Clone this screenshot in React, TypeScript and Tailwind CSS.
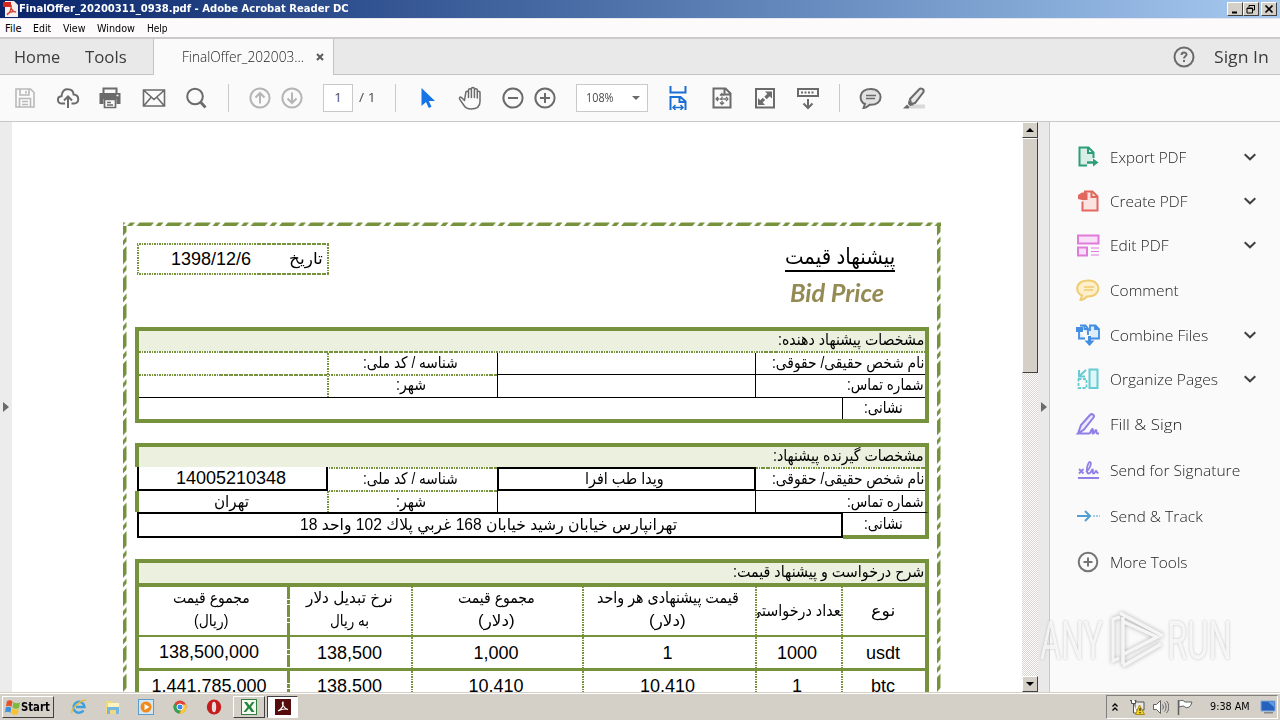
import { useLayoutEffect, useRef, useState } from 'react';
import type { ReactNode } from 'react';
import clsx from 'clsx';

// ============================================================
// Shared helpers
// ============================================================

// Keeps a run of text on one line and fits it to a fixed width
function Fit({ w, className, rtl, children }: { w: number; className?: string; rtl?: boolean; children: ReactNode }) {
  const ref = useRef<HTMLSpanElement>(null);
  const [scale, setScale] = useState(1);

  useLayoutEffect(() => {
    if (ref.current) setScale(w / ref.current.offsetWidth);
  }, [w]);

  return (
    <span className={clsx('flex shrink-0 justify-start whitespace-nowrap', className)} style={{ width: w }}>
      <span
        ref={ref}
        dir={rtl ? 'rtl' : 'ltr'}
        className="block w-max shrink-0 origin-left"
        style={{ transform: `scaleX(${scale})` }}
      >
        {children}
      </span>
    </span>
  );
}

function Fa({ w, className, children }: { w: number; className?: string; children: ReactNode }) {
  return (
    <Fit w={w} rtl className={clsx("font-['Liberation_Sans','DejaVu_Sans',sans-serif] leading-5 text-black", className ?? 'text-[16px]')}>
      {children}
    </Fit>
  );
}

function Icon({ className, children }: { className?: string; children: ReactNode }) {
  return (
    <svg
      viewBox="0 0 24 24"
      fill="none"
      stroke="currentColor"
      strokeWidth="2"
      className={clsx('size-6 shrink-0', className)}
    >
      {children}
    </svg>
  );
}

// ============================================================
// Window chrome
// ============================================================

function CaptionButton({ className, children }: { className?: string; children: ReactNode }) {
  return (
    <div
      className={clsx(
        'flex h-3.5 w-4 items-center justify-center border border-t-white border-l-white border-r-[#404040] border-b-[#404040] bg-[#d4d0c8]',
        className,
      )}
    >
      <svg viewBox="0 0 12 10" className="h-2.5 w-3" fill="none" stroke="black">
        {children}
      </svg>
    </div>
  );
}

function TitleBar() {
  return (
    <div className="flex h-[18px] items-center bg-linear-to-r from-[#0a246a] to-[#a6caf0] pr-[3px] pl-[3px]">
      <svg viewBox="0 0 16 16" className="size-4">
        <path d="M2 0h9l4 4v12H2z" fill="#f6eeee" />
        <path d="M0 1h8v5H0z" fill="#d3281f" />
        <path d="M4 14c3-2 5-7 4-10M4 13c3-2 6-3 9-2M8 7c1 2 3 4 5 4" stroke="#d9372c" strokeWidth="1.3" fill="none" />
      </svg>
      <Fit w={330} className="font-['DejaVu_Sans_Condensed','DejaVu_Sans',sans-serif] text-[11px] font-bold text-white">
        FinalOffer_20200311_0938.pdf - Adobe Acrobat Reader DC
      </Fit>
      <div className="ml-auto flex">
        <CaptionButton>
          <path d="M3 8.5h5" strokeWidth="2" />
        </CaptionButton>
        <CaptionButton>
          <path d="M4 3V1.5h5.5V6H8M2 4h5.500v5H2zM4 1.500h6M2 4.500h6" />
        </CaptionButton>
        <CaptionButton className="ml-0.5">
          <path d="M2.500 1.500l7 7M9.500 1.500l-7 7" strokeWidth="1.700" />
        </CaptionButton>
      </div>
    </div>
  );
}

function MenuBar() {
  return (
    <div className="flex h-[19px] items-center border-t border-[#e8e8f0] bg-[#fcfafa] pt-0.5 pl-[5px] font-['DejaVu_Sans_Condensed','DejaVu_Sans',sans-serif] text-[11px] text-black">
      <Fit w={16}>File</Fit>
      <Fit w={18} className="ml-3">Edit</Fit>
      <Fit w={22} className="ml-3">View</Fit>
      <Fit w={38} className="ml-3">Window</Fit>
      <Fit w={21} className="ml-3">Help</Fit>
    </div>
  );
}

function TabStrip() {
  return (
    <div className="flex h-[38px] border-t-2 border-[#cacaca] bg-[#e9e9e9] font-['Open_Sans','Noto_Sans',sans-serif] text-[#3c3c3c]">
      <div className="flex w-[154px] items-center border-r border-b border-[#c4c4c4] pl-3.5 text-base">
        <Fit w={46}>Home</Fit>
        <Fit w={42} className="ml-[25px]">Tools</Fit>
      </div>
      <div className="flex w-[179px] items-center bg-[#fafafa] pl-7">
        <Fit w={122} className="text-sm font-light text-[#222]">FinalOffer_202003...</Fit>
        <svg viewBox="0 0 8 8" className="ml-3 size-2" stroke="#5c5c5c" strokeWidth="2">
          <path d="M1 1l6 6M7 1L1 7" />
        </svg>
      </div>
      <div className="flex flex-1 items-center justify-end border-b border-l border-[#c4c4c4] pr-[11px]">
        <Icon className="text-[#6b6b6b]">
          <circle cx="12" cy="12" r="9.500" />
          <path d="M9.500 10c0-3.500 5-3.200 5-.5 0 1.800-2.500 1.800-2.500 4M12 15v2" />
        </Icon>
        <Fit w={55} className="ml-[18px] text-base">Sign In</Fit>
      </div>
    </div>
  );
}

function Separator() {
  return <div className="ml-[19px] h-7 w-px bg-[#c9c9c9]" />;
}

function Toolbar() {
  return (
    <div className="flex h-[47px] items-center border-b border-[#c8c8c8] bg-[#fafafa] pl-[13px] font-['Open_Sans','Noto_Sans',sans-serif] text-[#6b6b6b]">
      <Icon className="text-[#b9b9b9]">
        <path d="M3 3h14.500L21 6.500V21H3z" strokeWidth="1.600" />
        <path d="M7 3v6h9V3M6.500 21v-8.500h11V21M9 15.500h6M9 18.500h6M13 5v2.500" strokeWidth="1.600" />
      </Icon>
      <Icon className="ml-[19px]">
        <path d="M9 17.500H6C.8 17.500.6 10.500 5.500 10.200 6 4.500 9 3 12 3.300c3.500 0 5.300 2.200 5.600 5.200 6 .3 6 8.500.9 9H15.500" />
        <path d="M12 22v-11.500M8 14.500l4-4 4 4" />
      </Icon>
      <Icon className="ml-[18px]">
        <path d="M5.500 7V2.500h13V7" />
        <path d="M1.500 7h21v11h-4v-5h-13v5h-4z" fill="currentColor" stroke="none" />
        <path d="M6.500 13.500h11v8h-11zM9 16.500h4M9 19h6" strokeWidth="1.700" />
        <path d="M18.500 9.500h2" stroke="#fafafa" strokeWidth="1.500" />
      </Icon>
      <Icon className="ml-5">
        <path d="M1.500 4h21v16h-21zM2 4.500l10 9 10-9M2 19.500l7-8M22 19.500l-7-8" strokeWidth="1.600" />
      </Icon>
      <Icon className="ml-[18px]">
        <circle cx="11" cy="10.500" r="7.800" />
        <path d="M16.500 16l5 5.500" strokeWidth="2.800" />
      </Icon>
      <div className="ml-5 h-7 w-px bg-[#c9c9c9]" />
      <Icon className="ml-[19px] text-[#b5b5b5]">
        <circle cx="12" cy="12" r="9.600" />
        <path d="M12 17.500v-10M7.500 11.500L12 7l4.500 4.500" />
      </Icon>
      <Icon className="ml-2 text-[#b5b5b5]">
        <circle cx="12" cy="12" r="9.600" />
        <path d="M12 6.500v10M7.500 12.500L12 17l4.500-4.500" />
      </Icon>
      <div className="ml-[19px] flex h-7 w-[30px] items-center justify-center border border-[#c9c9c9] bg-white text-[13px] text-[#4b4b4b]">
        1
      </div>
      <Fit w={17} className="ml-1.5 text-[13px] text-[#4b4b4b]">/ 1</Fit>
      <Separator />
      <Icon className="ml-[19px] text-[#1473e6]">
        <path d="M6.500 2v18l4.500-4 2.800 6 2.700-1.300-2.700-5.700H20z" fill="currentColor" stroke="none" />
      </Icon>
      <Icon className="ml-[19px]">
        <path
          d="M6.500 14.500L3.500 11.500c-1.500-1-2.700.6-1.700 1.900l4.200 6.100c2 3 4 3.500 7 3.500 6 0 9-3 9-7.500V6.500c0-1.800-2.700-1.800-2.700 0V12V4c0-1.800-2.900-1.800-2.900 0v7.500V2.800c0-1.800-3-1.800-3 0v8.700V4c0-1.800-2.900-1.800-2.900 0v7.500V6.500c0-1.800-2.700-1.800-2.700 0z"
          strokeWidth="1.500"
          strokeLinejoin="round"
        />
      </Icon>
      <Icon className="ml-[19px]">
        <circle cx="12" cy="12" r="9.600" />
        <path d="M7 12h10" />
      </Icon>
      <Icon className="ml-2">
        <circle cx="12" cy="12" r="9.600" />
        <path d="M7 12h10M12 7v10" />
      </Icon>
      <div className="ml-[19px] flex h-7 w-[72px] items-center border border-[#c9c9c9] bg-white pl-[9px] text-[#4b4b4b]">
        <Fit w={28} className="text-xs">108%</Fit>
        <svg viewBox="0 0 8 4" className="ml-[18px] h-1 w-2" fill="#6b6b6b">
          <path d="M0 0h8L4 4z" />
        </svg>
      </div>
      <Icon className="ml-[18px] text-[#1a6fd4]">
        <path d="M4.500 0v6.500h15V0M4.500 24V11h10l5 4.500V24M13.500 11v5h6" />
        <path d="M7.500 21.500h9M9.500 19l-2.500 2.500 2.500 2.500M14.500 19l2.500 2.500-2.500 2.500" strokeWidth="1.500" />
      </Icon>
      <Icon className="ml-5">
        <path d="M3.500 2.500h12l5 5v14h-17zM14.500 2.500v6h6" />
        <path
          d="M12 7.500v11M6 13h12M10 9.500l2-2 2 2M10 16.500l2 2 2-2M8 11l-2 2 2 2M16 11l2 2-2 2"
          strokeWidth="1.300"
          strokeDasharray="3 .6"
        />
      </Icon>
      <Icon className="ml-[19px]">
        <path d="M3 3h18v18.500H3z" />
        <path d="M12 5.500h7v7l-2.300-2.300-3 3-2.400-2.400 3-3zM5 12l2.300 2.300 2.500-2.500 2.300 2.300-2.500 2.500L12 19H5z" fill="currentColor" stroke="none" />
      </Icon>
      <Icon className="ml-[19px]">
        <path d="M2 3h20v7H2z" />
        <path d="M5 6.500h14" strokeDasharray="2 1.500" />
        <path d="M12 13v9M7.500 17.500L12 22l4.500-4.500" />
      </Icon>
      <Separator />
      <Icon className="ml-[19px]">
        <path d="M12 3c-13 0-12.500 13-6 15l-1.500 4c3 .2 4-1.500 6-3.200 15 1 14-15.800 1.500-15.800z" fill="#e2e2e2" />
        <path d="M7 9.500h10M7 12.500h9" strokeWidth="1.300" />
      </Icon>
      <Icon className="ml-[19px]">
        <path d="M8 18.500h15v4H5z" fill="#d9d9d9" stroke="none" />
        <path d="M8 13l9-9.500c2-2 5.500-.5 4.500 2.500l-8.500 11-4 1z" fill="#e8e8e8" />
        <path d="M6.500 14l5.500 5-4 1-2-2zM1 22.500l4-4 2.500 2.500-1 1.500z" fill="currentColor" stroke="none" />
      </Icon>
    </div>
  );
}

// ============================================================
// Document page
// ============================================================

function HDots({ className }: { className?: string }) {
  return (
    <div
      className={clsx('h-0.5 shrink-0 bg-[repeating-linear-gradient(90deg,#76923c_0_1.5px,#fdfdf8_1.5px_2.5px)]', className)}
    />
  );
}

function VDots({ className }: { className?: string }) {
  return (
    <div
      className={clsx('w-0.5 shrink-0 bg-[repeating-linear-gradient(180deg,#76923c_0_1.5px,#fdfdf8_1.5px_2.5px)]', className)}
    />
  );
}

function VLine() {
  return <div className="w-px shrink-0 bg-black" />;
}

// Slanted dash-dot strip used on the edges of the page frame
function FrameTop() {
  return (
    <svg className="h-1 w-[818px]">
      <defs>
        <pattern id="dash-x" x="13.500" width="28.500" height="4" patternUnits="userSpaceOnUse">
          <path d="M3 .5h14.500l-3 3.500H0zM22 .5h5l-3 3.500h-5z" fill="#76923c" />
        </pattern>
      </defs>
      <rect width="818" height="4" fill="url(#dash-x)" />
    </svg>
  );
}

function FrameSide({ id }: { id: string }) {
  return (
    <svg className="h-[470px] w-1 shrink-0">
      <defs>
        <pattern id={id} y="20" width="4" height="28.500" patternUnits="userSpaceOnUse">
          <path d="M0 4l3.500-4v14.500l-3.500 4zM0 23l3.500-4v5l-3.500 4z" fill="#76923c" />
        </pattern>
      </defs>
      <rect width="4" height="470" fill={`url(#${id})`} />
    </svg>
  );
}

function Cell({ className, children }: { className?: string; children?: ReactNode }) {
  return <div className={clsx('flex shrink-0 items-center justify-center overflow-hidden', className)}>{children}</div>;
}

function SectionTitle({ w, children }: { w: number; children: ReactNode }) {
  return (
    <div className="flex h-5 items-center justify-end bg-[#ebf1de] pr-px pb-0.5">
      <Fa w={w}>{children}</Fa>
    </div>
  );
}

function SellerTable() {
  return (
    <div className="h-24 w-[794px] border-4 border-[#76923c]">
      <SectionTitle w={146}>مشخصات پیشنهاد دهنده:</SectionTitle>
      <HDots />
      <div className="flex h-11">
        <div className="w-[188px]">
          <Cell className="h-[21px]" />
          <HDots />
        </div>
        <VDots />
        <div className="w-[168px]">
          <Cell className="h-[21px] pr-1.5 pb-0.5">
            <Fa w={95}>شناسه / کد ملی:</Fa>
          </Cell>
          <HDots />
          <Cell className="h-[21px] pr-1 pb-1">
            <Fa w={30}>شهر:</Fa>
          </Cell>
        </div>
        <VLine />
        <div className="w-[257px]">
          <Cell className="h-[21px]" />
          <div className="h-px bg-black" />
        </div>
        <VLine />
        <div className="w-[169px]">
          <Cell className="h-[21px] justify-end! pr-px pb-0.5">
            <Fa w={152}>نام شخص حقیقی/ حقوقی:</Fa>
          </Cell>
          <div className="h-px bg-black" />
          <Cell className="h-[21px] justify-end! pr-px pb-0.5">
            <Fa w={77}>شماره تماس:</Fa>
          </Cell>
        </div>
      </div>
      <div className="h-px bg-black" />
      <div className="flex h-[21px]">
        <div className="w-[703px]" />
        <VLine />
        <Cell className="w-[82px] pr-0.5 pb-0.5">
          <Fa w={39}>نشانی:</Fa>
        </Cell>
      </div>
    </div>
  );
}

function BuyerTable() {
  return (
    <div className="h-24 w-[794px]">
      <div className="border-x-4 border-t-4 border-[#76923c]">
        <SectionTitle w={151}>مشخصات گیرنده پیشنهاد:</SectionTitle>
      </div>
      <div className="flex h-[45px]">
        <div className="w-[194px]">
          <Cell className="ml-0.5 h-6 w-[191px] border-x-2 border-b-2 border-black pr-[3px] text-lg leading-5">14005210348</Cell>
          <div className="flex h-[21px] border-l-4 border-[#76923c]">
            <Cell className="w-[188px] pr-1">
              <Fa w={35}>تهران</Fa>
            </Cell>
            <VDots />
          </div>
        </div>
        <div className="w-[168px]">
          <HDots />
          <Cell className="h-[21px] pr-1.5 pb-0.5">
            <Fa w={95}>شناسه / کد ملی:</Fa>
          </Cell>
          <HDots />
          <Cell className="h-5 pr-1">
            <Fa w={30}>شهر:</Fa>
          </Cell>
        </div>
        <div className="w-[259px]">
          <Cell className="h-6 border-2 border-black pr-1">
            <Fa w={79}>ویدا طب افرا</Fa>
          </Cell>
          <div className="h-[21px] border-x border-black" />
        </div>
        <div className="w-[173px] border-r-4 border-[#76923c]">
          <HDots />
          <Cell className="h-[21px] justify-end! pr-px pb-0.5">
            <Fa w={152}>نام شخص حقیقی/ حقوقی:</Fa>
          </Cell>
          <div className="h-px bg-black" />
          <Cell className="h-[21px] justify-end! pr-px">
            <Fa w={77}>شماره تماس:</Fa>
          </Cell>
        </div>
      </div>
      <div className="flex h-[27px]">
        <Cell className="ml-0.5 h-[26px] w-[706px] border-2 border-black pr-[3px]">
          <Fa w={377}>تهرانپارس خیابان رشید خیابان 168 غربي پلاك 102 واحد 18</Fa>
        </Cell>
        <Cell className="w-[86px] border-t border-r-4 border-b-4 border-t-black border-r-[#76923c] border-b-[#76923c] pr-0.5">
          <Fa w={39}>نشانی:</Fa>
        </Cell>
      </div>
    </div>
  );
}

interface PriceRowProps {
  cells: ReactNode[];
  className: string;
}

// Columns run left to right: total rial, rate, total dollar, unit price, amount, type
const COLUMN_WIDTHS = [
  'w-[148px] pr-1',
  'w-[121px] pr-0.5',
  'w-[169px] pr-[3px]',
  'w-[171px] pr-1',
  'w-[84px] pr-1',
  'w-[82px] pr-0.5',
];

function PriceRow({ cells, className }: PriceRowProps) {
  return (
    <div className={clsx('flex', className)}>
      {cells.map((cell, i) => (
        <div key={i} className="flex">
          {i === 1 && (
            <div className="w-[3px] bg-[repeating-linear-gradient(180deg,#76923c_0_12px,#fff_12px_13px,#76923c_13px_17px,#fff_17px_18px)]" />
          )}
          {i > 1 && <VDots />}
          <Cell className={clsx('flex-col text-lg leading-6', COLUMN_WIDTHS[i])}>{cell}</Cell>
        </div>
      ))}
    </div>
  );
}

const PRICE_ROWS = [
  [<span className="pr-1 pb-0.5">138,500,000</span>, '138,500', '1,000', '1', '1000', 'usdt'],
  [<span className="pr-1">1,441,785,000</span>, '138,500', '10,410', '10,410', '1', 'btc'],
];

function TwoLines({ top, topWidth, bottom, bottomWidth }: { top: string; topWidth: number; bottom: string; bottomWidth: number }) {
  return (
    <>
      <Fa w={topWidth} className="text-[16px]">{top}</Fa>
      <Fa w={bottomWidth} className="mt-[3px] mb-[3px] text-[16px]">{bottom}</Fa>
    </>
  );
}

function PriceTable() {
  return (
    <div className="w-[794px] border-x-4 border-t-4 border-[#76923c]">
      <SectionTitle w={191}>شرح درخواست و پیشنهاد قیمت:</SectionTitle>
      <div className="h-1 bg-[#76923c]" />
      <PriceRow
        className="h-12"
        cells={[
          <TwoLines top="مجموع قیمت" topWidth={77} bottom="(ریال)" bottomWidth={34} />,
          <TwoLines top="نرخ تبدیل دلار" topWidth={87} bottom="به ریال" bottomWidth={39} />,
          <TwoLines top="مجموع قیمت" topWidth={77} bottom="(دلار)" bottomWidth={37} />,
          <TwoLines top="قیمت پیشنهادی هر واحد" topWidth={142} bottom="(دلار)" bottomWidth={37} />,
          <Fa w={95}>تعداد درخواستی</Fa>,
          <Fa w={24}>نوع</Fa>,
        ]}
      />
      <div className="h-0.5 bg-[#76923c]" />
      <PriceRow className="h-[31px]" cells={PRICE_ROWS[0]} />
      <div className="h-[3px] bg-[#76923c]" />
      <PriceRow className="h-[30px]" cells={PRICE_ROWS[1]} />
    </div>
  );
}

function DocumentPage() {
  return (
    <div className="h-[570px] w-[1010px] overflow-hidden bg-white pt-[100px] pl-[111px] font-['Liberation_Sans',sans-serif] text-black">
      <div className="w-[818px]">
        <FrameTop />
        <div className="flex">
          <FrameSide id="dash-left" />
          <div className="w-[810px] pl-2">
            <div className="flex h-[101px] justify-between pt-[17px] pr-[42px] pl-0.5">
              <div className="h-8 w-48">
                <HDots />
                <div className="flex h-7 justify-between">
                  <VDots />
                  <div className="flex flex-1 items-center justify-between pr-1 pl-8">
                    <span className="text-lg leading-6">1398/12/6</span>
                    <Fa w={34}>تاریخ</Fa>
                  </div>
                  <VDots />
                </div>
                <HDots />
              </div>
              <div className="flex w-[110px] flex-col items-center">
                <div className="flex h-[29px] items-center border-b-2 border-black">
                  <Fa w={110} className="text-[22px]">پیشنهاد قیمت</Fa>
                </div>
                <Fit w={94} className="mt-1.5 mr-1.5 font-['Lato',sans-serif] text-2xl leading-[30px] font-bold text-[#948a54] italic">
                  Bid Price
                </Fit>
              </div>
            </div>
            <SellerTable />
            <div className="h-5" />
            <BuyerTable />
            <div className="h-5" />
            <PriceTable />
          </div>
          <FrameSide id="dash-right" />
        </div>
      </div>
    </div>
  );
}

function ScrollBar() {
  const button =
    'flex h-4 w-4 items-center justify-center border border-t-white border-l-white border-r-[#404040] border-b-[#404040] bg-[#d4d0c8]';
  return (
    <div className="flex w-4 flex-col bg-[repeating-conic-gradient(#d9d5ce_0_25%,#fff_0_50%)] bg-size-[2px_2px]">
      <div className={button}>
        <svg viewBox="0 0 8 4" className="h-1 w-2">
          <path d="M0 4l4-4 4 4z" />
        </svg>
      </div>
      <div className="h-[235px] border border-t-white border-l-white border-r-[#404040] border-b-[#404040] bg-[#d4d0c8]" />
      <div className="flex-1" />
      <div className={button}>
        <svg viewBox="0 0 8 4" className="h-1 w-2">
          <path d="M0 0h8L4 4z" />
        </svg>
      </div>
    </div>
  );
}

// ============================================================
// Tools panel
// ============================================================

const TOOLS: { label: string; width: number; expandable?: boolean; color: string; icon: ReactNode }[] = [
  {
    label: 'Export PDF',
    width: 76,
    expandable: true,
    color: 'text-[#2d9d78]',
    icon: (
      <>
        <path d="M11 20.500H3.500v-18h9l5 5V13M12 2.500v5.500h5.500" fill="#d8eee6" />
        <path d="M11 17.500h8" strokeWidth="2.500" />
        <path d="M17 13.500l5.500 4-5.500 4z" fill="currentColor" stroke="none" />
      </>
    ),
  },
  {
    label: 'Create PDF',
    width: 77,
    expandable: true,
    color: 'text-[#e2675e]',
    icon: (
      <>
        <path d="M6.500 12.500v9h15V7.500l-5-5H9V5M15.500 2.500V8h6" fill="#fbe3e1" />
        <path d="M2 6l4-2.500h5.500V11H6l-4-1z" fill="currentColor" stroke="none" />
      </>
    ),
  },
  {
    label: 'Edit PDF',
    width: 58,
    expandable: true,
    color: 'text-[#df7bdb]',
    icon: (
      <>
        <path d="M2 2.500h20.500v8H2zM2 14.500h9v8H2z" fill="#f9dff8" />
        <path d="M15 15h8M15 18.500h8M15 22h8" strokeWidth="1.200" />
      </>
    ),
  },
  {
    label: 'Comment',
    width: 69,
    color: 'text-[#f0cb72]',
    icon: (
      <>
        <path d="M12.500 2.500C-1.500 2.500-1 15 6 17.500L4.500 22c3 .2 5-2 6.500-3.500 15 .8 15-16 1.500-16z" fill="#fdefc9" />
        <path d="M8 9h10M8 12h9" strokeWidth="1.300" />
      </>
    ),
  },
  {
    label: 'Combine Files',
    width: 98,
    expandable: true,
    color: 'text-[#438ee0]',
    icon: (
      <>
        <path d="M3 8v7.500h6M4 2.500h5.500l2.500 3V12M14 15.500h9V6l-3.500-3.500H14V8M8.500 2.500V6H12M19 2.500V6h4" fill="#deebfa" strokeWidth="1.800" />
        <path d="M0 4h7v5H0zM8.500 17.500H12V13h3v4.500h3.500L13.500 23z" fill="currentColor" stroke="none" />
      </>
    ),
  },
  {
    label: 'Organize Pages',
    width: 108,
    expandable: true,
    color: 'text-[#66cbd3]',
    icon: (
      <>
        <path d="M13.500 2.500h8v18.500h-8z" fill="#ddf6f7" />
        <path d="M2.500 12h8v9h-8z" strokeDasharray="3 1.500" strokeWidth="1.800" />
        <path d="M10 3L4 8.500M3 3v6.500h6" />
      </>
    ),
  },
  {
    label: 'Fill & Sign',
    width: 72,
    color: 'text-[#8f7fe6]',
    icon: (
      <>
        <path d="M2 21.500l3-8.500L14 3c2-2 5 0 3.500 2.500L8 17.500l-6 4h11c2 0 2-5 3.500-4.500 1.500.5-1 4.500.5 4.500s2-3.500 3-3.500 0 3.500 1 3.500h2" fill="#ece9fd" />
      </>
    ),
  },
  {
    label: 'Send for Signature',
    width: 130,
    color: 'text-[#8f7fe6]',
    icon: (
      <>
        <path d="M2 20h21" />
        <path d="M3 11l4.500 4.500M7.500 11L3 15.500M10 14c4-3 6-9 4-10s-5 11-1.500 11.500c3 0 3-4 4-4s-.5 4 1 4 1.500-2.500 2.500-2.500.5 2.500 2.500 1.500" strokeWidth="1.800" />
      </>
    ),
  },
  {
    label: 'Send & Track',
    width: 93,
    color: 'text-[#509fd4]',
    icon: (
      <>
        <path d="M1 12h12M9 7l5 5-5 5" />
        <path d="M17 12h8" strokeDasharray="2 1" strokeWidth="1.200" />
      </>
    ),
  },
  {
    label: 'More Tools',
    width: 78,
    color: 'text-[#757575]',
    icon: (
      <>
        <circle cx="12" cy="12" r="9.300" />
        <path d="M7.500 12h9M12 7.500v9" />
      </>
    ),
  },
];

function ToolsPanel() {
  return (
    <div className="flex w-[231px] flex-col border-l border-[#c8c8c8] bg-[#fafafa] pt-[13px] font-['Open_Sans','Noto_Sans',sans-serif]">
      {TOOLS.map((tool) => (
        <div
          key={tool.label}
          className={clsx('flex items-center pr-6 pl-[26px] text-[15px] font-light text-[#1c1c1c]', tool.expandable ? 'h-11' : 'h-[46px]')}
        >
          <Icon className={tool.color}>{tool.icon}</Icon>
          <Fit w={tool.width} className="ml-2.5">{tool.label}</Fit>
          {tool.expandable && (
            <svg viewBox="0 0 12 8" className="ml-auto h-2 w-3" fill="none" stroke="#404040" strokeWidth="2">
              <path d="M.7 1.200L6 6.300l5.300-5.100" />
            </svg>
          )}
        </div>
      ))}
    </div>
  );
}

function Watermark() {
  const word =
    "font-['Roboto','Liberation_Sans',sans-serif] text-[53px] leading-[60px] text-white/85 [text-shadow:0_0_3px_#aaa]";
  return (
    <div className="absolute top-[608px] left-[1040px] flex h-[66px] items-center opacity-80">
      <Fit w={63} className={word}>ANY</Fit>
      <svg viewBox="0 0 60 64" className="mx-0.5 h-16 w-[60px] drop-shadow-[0_0_2px_#999]" fill="none" stroke="#f5f5f5" strokeWidth="3.500">
        <path d="M18 8v47M15 4l43 23M18 57l38-22M17 46l35-18L17 12" />
        <path d="M8 9v43l6-3M8 10l7-2" strokeWidth="3" />
      </svg>
      <Fit w={65} className={word}>RUN</Fit>
    </div>
  );
}

// ============================================================
// Taskbar
// ============================================================

function Taskbar() {
  return (
    <div className="flex h-7 border-t border-[#d4d0c8] bg-[#d4d0c8] font-['DejaVu_Sans_Condensed','DejaVu_Sans',sans-serif] text-[11px] text-black">
      <div className="flex flex-1 items-center border-t border-white pl-0.5">
        <div className="flex h-[22px] w-[52px] items-center border border-t-white border-l-white border-r-[#404040] border-b-[#404040] pl-0.5">
          <svg viewBox="0 0 16 16" className="size-4">
            <path d="M2 2c2-1 4-1 5.500.5L6.500 8C5 6.500 3 6.500 1 7.500z" fill="#e8502a" />
            <path d="M8.500 3c2 1.500 4 1.500 6.500.5L14 9c-2 1-4.500 1-6.500-.5z" fill="#7fb93c" />
            <path d="M.8 8.500c2-1 4-1 5.500.5l-1 5C4 12.500 2 12.500 0 13.500z" fill="#3c8fd8" />
            <path d="M7.200 9.500c2 1.500 4 1.500 6.500.5l-1 5c-2 1-4.500 1-6.500-.5z" fill="#f8c22c" />
          </svg>
          <Fit w={29} className="text-xs font-bold">Start</Fit>
        </div>
        <svg viewBox="0 0 16 16" className="ml-[17px] size-4" fill="none">
          <path d="M12.500 11.500A5.500 5.500 0 1 1 13.500 8H5" stroke="#3da0de" strokeWidth="2.400" />
          <path d="M1 14C-.5 10 11-.5 15 1.500" stroke="#e9bb39" strokeWidth="1.500" />
        </svg>
        <svg viewBox="0 0 16 16" className="ml-[18px] size-4">
          <path d="M1 2h6l1 2h7v11H1z" fill="#f0d781" />
          <path d="M3 4h11v4H3z" fill="#fff3be" />
          <path d="M2 8h12v7h-3v-4H5v4H2z" fill="#74b8e0" />
        </svg>
        <svg viewBox="0 0 16 16" className="ml-[17px] size-4">
          <rect x=".5" y=".5" width="15" height="15" fill="#d3e6f4" stroke="#5b9dcc" />
          <circle cx="8" cy="8" r="5.500" fill="#f18a1c" />
          <path d="M6.500 5v6l5-3z" fill="white" />
        </svg>
        <svg viewBox="0 0 16 16" className="ml-[18px] size-4">
          <circle cx="8" cy="8" r="6.500" fill="#dc4436" />
          <path d="M2.300 5a6.500 6.500 0 0 0 5 9.500L10 9z" fill="#31a354" />
          <path d="M14 5.500A6.500 6.500 0 0 1 7.300 14.500L11 8V5.500z" fill="#f9cd32" />
          <circle cx="8" cy="8" r="3" fill="#4285e8" stroke="white" />
        </svg>
        <svg viewBox="0 0 16 16" className="ml-[18px] size-4">
          <ellipse cx="8" cy="8" rx="7.200" ry="7.500" fill="#c51c1c" />
          <ellipse cx="8" cy="8" rx="2.200" ry="5.300" fill="#e9dede" />
        </svg>
        <div className="ml-[11px] flex h-[22px] w-8 items-center justify-center border border-t-white border-l-white border-r-[#404040] border-b-[#404040]">
          <svg viewBox="0 0 16 16" className="size-4">
            <rect x=".5" y=".5" width="15" height="15" fill="#f4faf2" stroke="#2f7d3a" />
            <path d="M3 3h3l2.500 3.500L11 3h2.500L10 8l3.500 5h-3L8 9.500 5 13H2.500L6.500 8z" fill="#23843a" />
          </svg>
        </div>
        <div className="ml-0.5 flex h-[22px] w-[31px] items-center justify-center border border-t-[#404040] border-l-[#404040] border-r-white border-b-white bg-white">
          <svg viewBox="0 0 16 16" className="size-4" fill="none">
            <path d="M0 0h16v16H0z" fill="#550c0c" />
            <path d="M3 12c4-2 6-6 5-9-1.500 1 0 6 5 7.500-3-1-7 0-10 1.500z" stroke="white" strokeWidth="1.100" />
          </svg>
        </div>
        <div className="mr-0.5 ml-auto flex h-6 w-[172px] items-center border border-t-[#808080] border-l-[#808080] border-r-white border-b-white pl-1">
          <svg viewBox="0 0 8 10" className="h-2.5 w-2" fill="none" stroke="black" strokeWidth="1.300">
            <path d="M1.500 4.500L4 2l2.500 2.500M1.500 8.500L4 6l2.500 2.500" />
          </svg>
          <svg viewBox="0 0 16 16" className="ml-2.5 size-4" fill="none" stroke="#505050">
            <path d="M6 3h9v8H6z" fill="#eceae4" />
            <path d="M2.500 1v3.500h4V1M4.500 5v9h4M1 1.500h2M5.500 1.500h2" fill="white" />
            <path d="M10.500 6l5 9.500h-9z" fill="#f5d22b" stroke="#a68a12" />
            <path d="M11 9v3M11 13v1.300" stroke="black" />
          </svg>
          <svg viewBox="0 0 16 16" className="ml-2 size-4" fill="none" stroke="#606060">
            <path d="M.5 5.500h3l4-4v13l-4-4h-3z" fill="white" />
            <path d="M9.500 5.500c1 1 1 4 0 5M11.500 3.500c2 2 2 7 0 9M13.500 2c3 3 3 9 0 12" />
          </svg>
          <svg viewBox="0 0 16 16" className="ml-2 size-4" fill="none" stroke="#606060">
            <path d="M1.500 1v15" strokeWidth="1.500" />
            <path d="M2 2c2-1 4-1 6 1h7c-1 3-2 5-4 5.500-3 1-3-1.500-5-1.500L2 8z" fill="white" />
          </svg>
          <Fit w={40} className="ml-[17px]">9:38 AM</Fit>
          <svg viewBox="0 0 16 16" className="ml-2.5 size-4">
            <path d="M1 2h14v10H1z" fill="#2362bd" stroke="#83a9de" />
            <path d="M8 3h6v5z" fill="#5c9be8" />
            <path d="M4 13h9v1.500H4z" fill="#888" />
          </svg>
        </div>
      </div>
    </div>
  );
}

export default function App() {
  return (
    <div className="relative flex h-[720px] w-[1280px] flex-col overflow-hidden bg-white">
      <TitleBar />
      <MenuBar />
      <TabStrip />
      <Toolbar />
      <div className="flex h-[570px]">
        <div className="w-3 bg-[#ececec]">
          <div className="flex h-full items-center pl-[3px]">
            <svg viewBox="0 0 6 10" className="h-2.5 w-1.5" fill="#6b6b6b">
              <path d="M0 0l6 5-6 5z" />
            </svg>
          </div>
        </div>
        <DocumentPage />
        <ScrollBar />
        <div className="flex w-[11px] items-center bg-[#e9e9e9] pl-[3px]">
          <svg viewBox="0 0 6 10" className="h-2.5 w-1.5" fill="#6b6b6b">
            <path d="M0 0l6 5-6 5z" />
          </svg>
        </div>
        <ToolsPanel />
      </div>
      <Taskbar />
      <Watermark />
    </div>
  );
}
